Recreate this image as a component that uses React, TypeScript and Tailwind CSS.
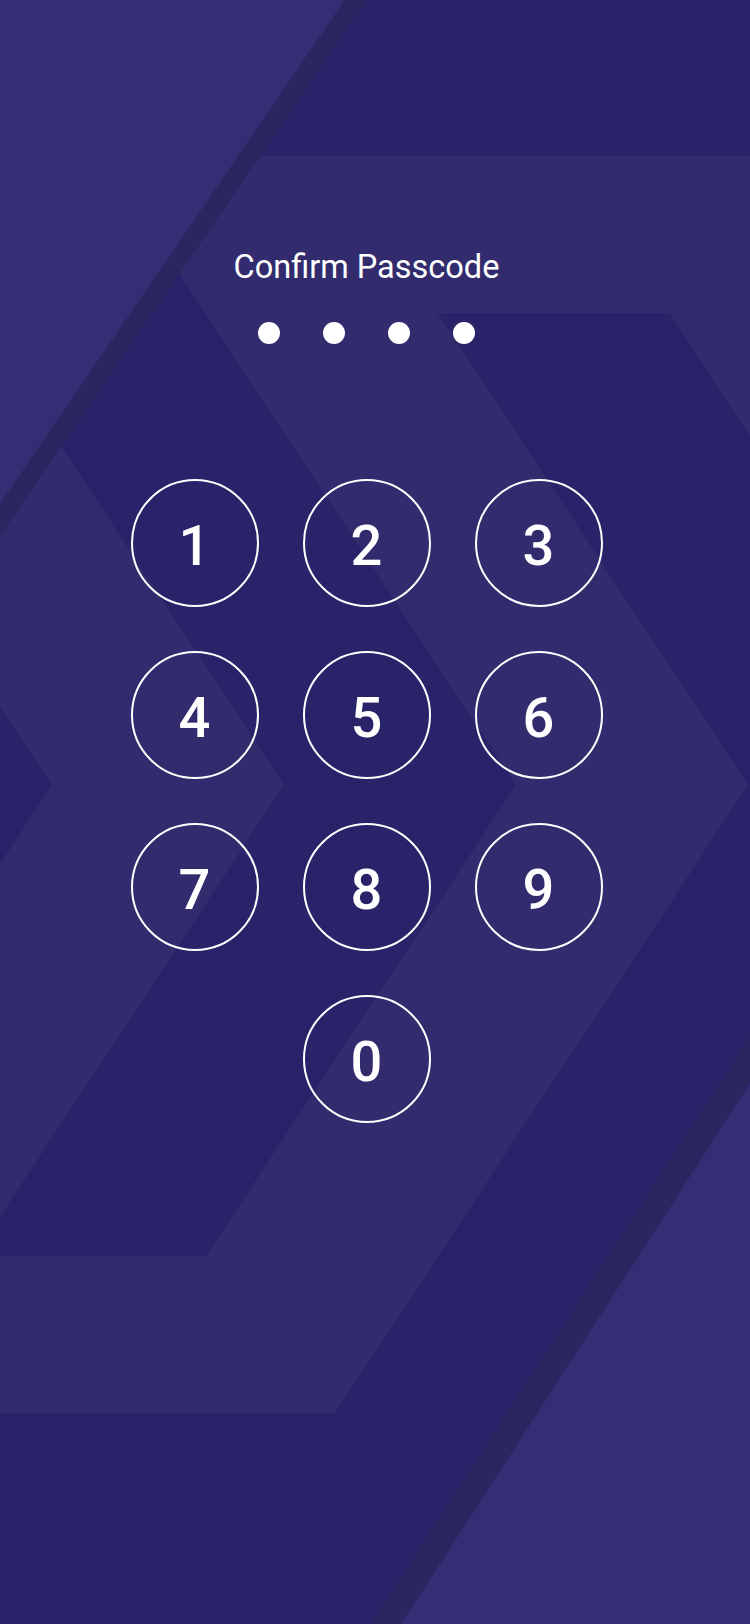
import React from "react";

// chevron background, measured off the 750x1624 frame
const BASE = "#29236a";
const BAND = "#322c6e";
const CORNER = "#352e75";
const STRIP = "#2a2660";

function Backdrop() {
  return (
    <svg
      className="absolute inset-0 w-full h-full"
      viewBox="0 0 750 1624"
      preserveAspectRatio="none"
      aria-hidden
    >
      <rect width="750" height="1624" fill={BASE} />
      {/* left chevron band */}
      <polygon points="-364,-200 284,785 -364,1770 -596,1770 52,785 -596,-200" fill={BAND} />
      {/* middle stepped band */}
      <polygon
        points="102,156 800,156 800,511 669.5,313 437.5,313 748,785 335,1413 -50,1413 -50,1256 206,1256 516,785"
        fill={BAND}
      />
      {/* top-left corner */}
      <polygon points="0,0 345,0 0,504" fill={CORNER} />
      <polygon points="345,0 367,0 0,536 0,504" fill={STRIP} />
      {/* bottom-right corner */}
      <polygon points="750,1083 750,1624 401,1624" fill={CORNER} />
      <polygon points="750,1036 750,1083 401,1624 371,1624" fill={STRIP} />
    </svg>
  );
}

const keys = ["1", "2", "3", "4", "5", "6", "7", "8", "9"];

function Key({ label, className = "" }: { label: string; className?: string }) {
  return (
    <button
      type="button"
      className={`w-[128px] h-[128px] rounded-full border-2 border-white flex items-center justify-center pt-[6px] text-white text-[56px] leading-none font-medium ${className}`}
    >
      {label}
    </button>
  );
}

export default function App() {
  const filled = 4;

  return (
    <div
      className="relative w-[750px] h-[1624px] overflow-hidden"
      style={{ fontFamily: "Roboto, 'Noto Sans', sans-serif" }}
    >
      <Backdrop />

      <div className="relative flex flex-col items-center pt-[248px] pr-[17px]">
        <h1 className="text-white text-[32.5px] leading-[38px] font-normal">Confirm Passcode</h1>

        <div className="flex gap-[43px] mt-[36px]">
          {Array.from({ length: 4 }).map((_, i) => (
            <span
              key={i}
              className={`w-[22px] h-[22px] rounded-full ${i < filled ? "bg-white" : "border-2 border-white"}`}
            />
          ))}
        </div>

        <div className="grid grid-cols-3 gap-[44px] mt-[135px]">
          {keys.map((k) => (
            <Key key={k} label={k} />
          ))}
          <Key label="0" className="col-start-2" />
        </div>
      </div>
    </div>
  );
}
